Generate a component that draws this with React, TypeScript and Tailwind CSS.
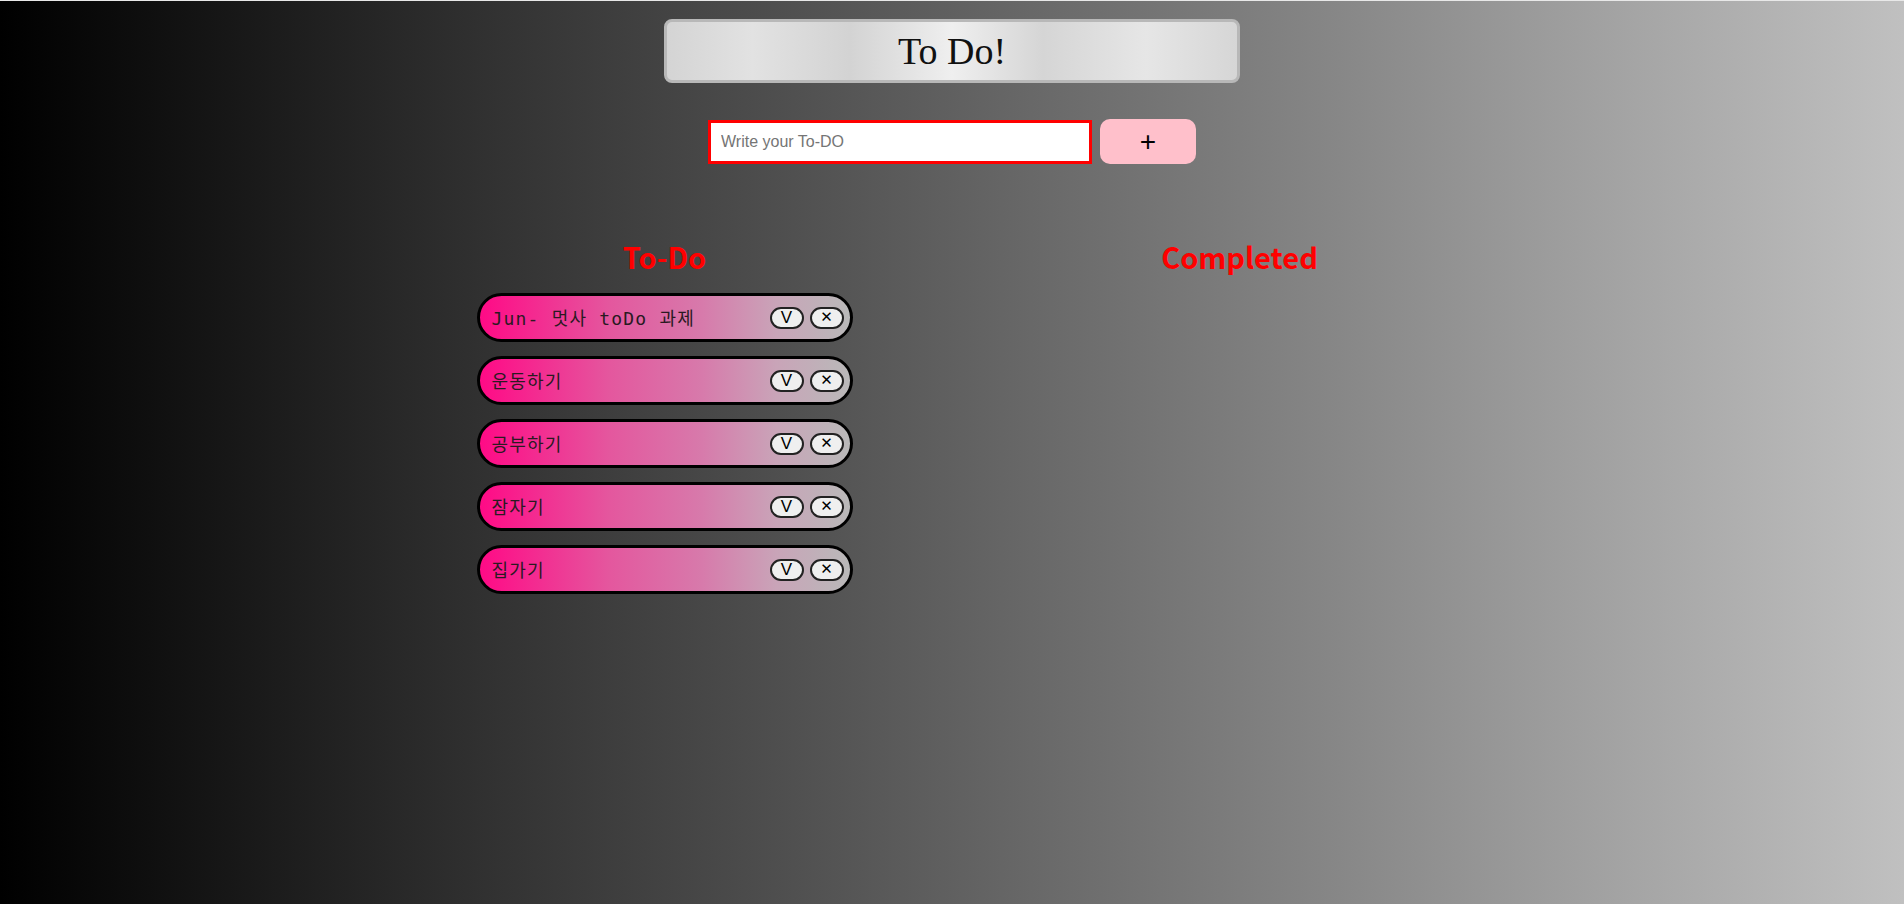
import React from 'react';

const todos = ['Jun- 멋사 toDo 과제', '운동하기', '공부하기', '잠자기', '집가기'];

const TodoItem: React.FC<{ text: string }> = ({ text }) => {
  return (
    <li className="flex h-[49px] w-[376px] items-center justify-between rounded-full border-[3px] border-black bg-[linear-gradient(to_right,#ff0a86,#e4579e_35%,#d77aab_60%,#c9a4b8_80%,#b9b9b9)] pl-[12px] pr-[6px]">
      <span className="pt-[2px] text-[18px] tracking-[1.2px] text-[#2a1a22] [font-family:'DejaVu_Sans_Mono','Noto_Sans_CJK_KR',monospace]">
        {text}
      </span>
      <div className="flex items-center gap-[6px]">
        <button className="flex h-[22px] w-[34px] items-center justify-center rounded-full border-2 border-[#222] bg-[#efefef] text-[17px] leading-none text-black [font-family:'Liberation_Sans',sans-serif]">
          V
        </button>
        <button className="flex h-[22px] w-[34px] items-center justify-center rounded-full border-2 border-[#222] bg-[#efefef] text-[15px] leading-none text-black [font-family:'DejaVu_Sans',sans-serif]">
          ✕
        </button>
      </div>
    </li>
  );
};

export default function App() {
  return (
    <div className="h-screen w-full overflow-hidden border-t border-[#e8e8e8] bg-[linear-gradient(to_right,#000000,#c0c0c0)]">
      <div className="flex flex-col items-center pt-[18px]">
        <header className="flex h-[64px] w-[576px] items-center justify-center rounded-[8px] border-[3px] border-[#b8b8b8] bg-[linear-gradient(to_right,#d4d4d4,#e2e2e2_15%,#d3d3d3_32%,#efefef_50%,#d5d5d5_66%,#e6e6e6_84%,#d6d6d6)]">
          <h1 className="text-[38px] font-light text-[#111] [font-family:'Liberation_Serif',serif]">To Do!</h1>
        </header>

        <form className="mt-[36px] flex items-center gap-[8px]" onSubmit={(e) => e.preventDefault()}>
          <input
            type="text"
            placeholder="Write your To-DO"
            className="h-[44px] w-[384px] border-[3px] border-[#ff0000] bg-white px-[10px] text-[16px] text-black placeholder:text-[#757575] outline-none [font-family:'Liberation_Sans',sans-serif]"
          />
          <button
            type="submit"
            className="h-[45px] w-[96px] rounded-[10px] bg-[#ffc0cb] text-[28px] leading-none text-black [font-family:'Liberation_Sans',sans-serif]"
          >
            +
          </button>
        </form>

        <div className="mt-[72px] grid w-[1150px] grid-cols-2">
          <section className="flex flex-col items-center">
            <h2 className="text-[29px] font-bold leading-[40px] text-[#ff0000] [font-family:'Noto_Sans_CJK_KR',sans-serif]">To-Do</h2>
            <ul className="mt-[17px] flex flex-col gap-[14px]">
              {todos.map((t) => (
                <TodoItem key={t} text={t} />
              ))}
            </ul>
          </section>
          <section className="flex flex-col items-center">
            <h2 className="text-[29px] font-bold leading-[40px] text-[#ff0000] [font-family:'Noto_Sans_CJK_KR',sans-serif]">Completed</h2>
            <ul className="mt-[17px] flex flex-col gap-[14px]"></ul>
          </section>
        </div>
      </div>
    </div>
  );
}
